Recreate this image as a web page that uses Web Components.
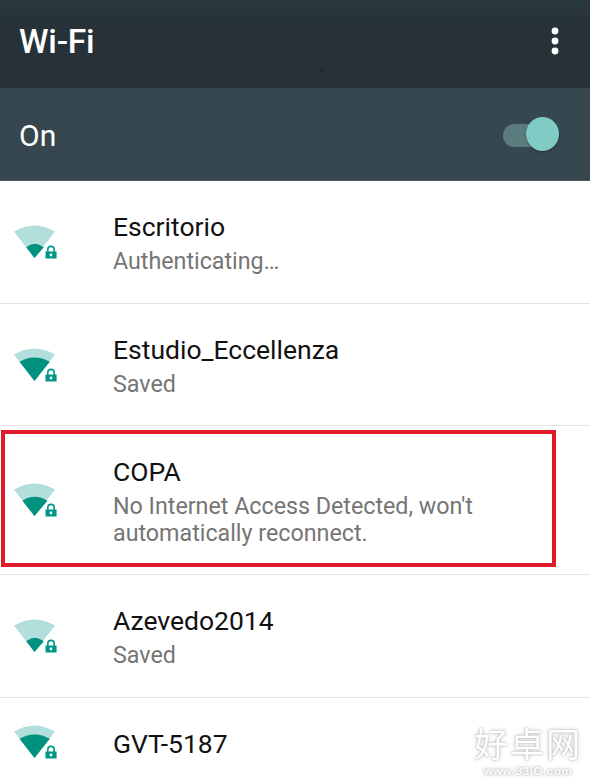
<!DOCTYPE html>
<html><head><meta charset="utf-8">
<style>
html,body{margin:0;padding:0;background:#fff}
body{width:590px;height:784px;overflow:hidden;font-family:Roboto,"Noto Sans CJK SC",sans-serif}
</style></head><body>
<wifi-screen>
  <wifi-appbar title-text="Wi-Fi"></wifi-appbar>
  <wifi-switchbar label="On"></wifi-switchbar>
  <wifi-row name="Escritorio" level="1" style="--h:123px">Authenticating…</wifi-row>
  <wifi-row name="Estudio_Eccellenza" level="3">Saved</wifi-row>
  <wifi-row name="COPA" level="2" style="--h:149px">No Internet Access Detected, won't<br>automatically reconnect.</wifi-row>
  <wifi-row name="Azevedo2014" level="1" style="--h:123px">Saved</wifi-row>
  <wifi-row name="GVT-5187" level="3" style="--h:88px" last></wifi-row>
  <red-mark></red-mark>
  <site-mark></site-mark>
</wifi-screen>
<script>
function def(name, css, html){
  customElements.define(name, class extends HTMLElement{
    connectedCallback(){
      if(this.shadowRoot) return;
      const s=this.attachShadow({mode:'open'});
      s.innerHTML='<style>'+css+'</style>'+(typeof html==='function'?html(this):html);
    }
  });
}
def('wifi-screen',':host{display:block;position:relative;width:590px;height:784px;overflow:hidden;background:#fff}','<slot></slot>');
def('wifi-appbar',`:host{display:flex;align-items:center;justify-content:space-between;height:88px;box-sizing:border-box;padding:0 30px 6px 19px;background:linear-gradient(#2a383f,#263238 30%,#263238);color:#fff;position:relative}
h1{margin:0;padding-top:2px;font:500 33.5px/40px Roboto,sans-serif;letter-spacing:-.2px}
svg{display:block}
i{position:absolute;left:321px;top:69px;width:2px;height:2px;border-radius:50%;background:#10171a}`,
 h=>`<h1>${h.getAttribute('title-text')}</h1><svg width="10" height="30" viewBox="0 0 10 30"><g fill="#fff"><circle cx="5" cy="5" r="3.4"/><circle cx="5" cy="15" r="3.4"/><circle cx="5" cy="25" r="3.4"/></g></svg><i></i>`);
def('wifi-switchbar',`:host{display:flex;align-items:center;justify-content:space-between;height:93px;box-sizing:border-box;padding:0 31px 0 19px;background:#37474f;color:#fff;border-bottom:1px solid #4c5558}
span{font:400 30px/36px Roboto,sans-serif;padding-top:4px}
.t{position:relative;width:56px;height:36px;margin-top:2px}
.t:before{content:"";position:absolute;left:0;right:14px;top:7px;height:23px;border-radius:12px;background:#5a7c7c}
.t:after{content:"";position:absolute;right:0;top:0;width:33px;height:34px;border-radius:50%;background:#80cbc4;box-shadow:0 1px 2px rgba(0,0,0,.4)}`,
 h=>`<span>${h.getAttribute('label')}</span><div class="t"></div>`);
const fans={1:'M12.2 22.3Q20.5 15.2 29.8 22.3L20.5 33Z',2:'M8.3 17.7Q20.5 9.6 33.5 17.7L20.5 33Z',3:'M5.5 13.7Q20.5 5.2 35.8 13.7L20.5 33Z'};
def('wifi-row',`:host{display:flex;align-items:center;height:var(--h,122px);box-sizing:border-box;border-bottom:1px solid #e4e4e4;padding-left:13.5px}
:host([last]){border-bottom:0}
svg{display:block;flex:none;margin-right:57.5px;overflow:visible}
.c{align-self:flex-start;padding-top:29px}
.n{font:400 26.5px/33px Roboto,sans-serif;color:#111}
.s{font:400 23.25px/27px Roboto,sans-serif;color:#757575;margin-top:5px}
.s:empty{display:none}`,
 h=>`<svg width="42" height="34" viewBox="0 0 42 34"><path d="M0 6.6Q20.5 -5.4 41 6.6L20.5 33Z" fill="#b2dfdb"/><path d="${fans[h.getAttribute('level')]}" fill="#00917f"/><path fill-rule="evenodd" fill="#00968a" d="M31.5 33.6V26.4H33V24.6A4 4 0 0 1 41 24.6V26.4H42.6V33.6ZM34.6 26.4H39.4V24.6A2.4 2.4 0 0 0 34.6 24.6ZM37 28.6A1.4 1.4 0 1 0 37 31.4 1.4 1.4 0 0 0 37 28.6Z"/></svg><div class="c"><div class="n">${h.getAttribute('name')}</div><div class="s"><slot></slot></div></div>`);
def('red-mark',`:host{display:block;position:absolute;left:1px;top:430px;width:555px;height:137px;box-sizing:border-box;border:4px solid #e01b2b;pointer-events:none}`,'');
def('site-mark',`:host{display:block;position:absolute;left:473px;top:726px;width:110px;text-align:center;color:#fff;text-shadow:0 0 2px #aaa,0 0 4px #ccc;font-family:"Noto Sans CJK SC",sans-serif;line-height:1}
.a{font-size:34px;letter-spacing:2px;font-weight:400}
.b{font:700 11.5px/12px "Liberation Sans",sans-serif;letter-spacing:.6px;margin-top:5px}`,
 `<div class="a">好卓网</div><div class="b">www.33lO.com</div>`);
</script>
</body></html>
